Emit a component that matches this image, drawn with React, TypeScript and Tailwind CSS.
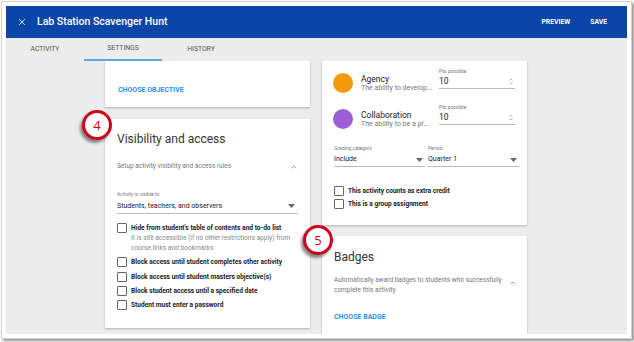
import { X, ChevronUp } from 'lucide-react';

const Caret = () => (
    <svg width="7" height="4" viewBox="0 0 7 4" className="shrink-0">
        <path d="M0 0 L7 0 L3.5 4 Z" fill="#666" />
    </svg>
);

const Spinner = () => (
    <svg width="4" height="7" viewBox="0 0 4 7" className="shrink-0">
        <path d="M0.5 2.5 L2 1 L3.5 2.5 M0.5 4.5 L2 6 L3.5 4.5" stroke="#999" strokeWidth="0.7" fill="none" />
    </svg>
);

const Box = () => <div className="w-[10px] h-[10px] shrink-0 border border-[#666] rounded-[1px] bg-white" />;

const Check = ({ label }: { label: string }) => (
    <div className="flex items-start gap-[4px]">
        <Box />
        <span className="text-[6.6px] leading-[10px] font-bold text-[#222]">{label}</span>
    </div>
);

const Marker = ({ n, className }: { n: number; className: string }) => (
    <div
        className={`absolute w-[30px] h-[30px] rounded-full bg-white border-[3px] border-[#d0021b] shadow-[-2px_3px_3px_rgba(0,0,0,0.45)] flex items-center justify-center text-[13px] leading-none text-[#d0021b] font-['Open_Sans',sans-serif] z-10 ${className}`}
    >
        {n}
    </div>
);

const Objective = ({ color, name, desc }: { color: string; name: string; desc: string }) => (
    <div className="flex items-start h-[36px]">
        <div className={`mt-[8px] w-[20px] h-[20px] rounded-full shrink-0 ${color}`} />
        <div className="ml-[8px] w-[72px] mt-[9px]">
            <div className="text-[8.5px] leading-[10px] text-[#222]">{name}</div>
            <div className="text-[7px] leading-[9px] text-[#777] whitespace-nowrap">{desc}</div>
        </div>
        <div className="ml-[6px] w-[76px] mt-[3px]">
            <div className="text-[5px] leading-[6px] text-[#777]">Pts possible</div>
            <div className="mt-[2px] h-[13px] border-b border-[#bbb] flex items-start justify-between pr-[2px]">
                <div className="text-[8.5px] leading-[10px] text-[#222]">10</div>
                <div className="mt-[2px]"><Spinner /></div>
            </div>
        </div>
    </div>
);

const Select = ({ label, value, w }: { label: string; value: string; w: string }) => (
    <div className={w}>
        <div className="text-[5px] leading-[6px] text-[#777]">{label}</div>
        <div className="mt-[4px] h-[12px] border-b border-[#bbb] flex items-start justify-between pr-[2px]">
            <div className="text-[7px] leading-[9px] text-[#222]">{value}</div>
            <div className="mt-[3px]"><Caret /></div>
        </div>
    </div>
);

export default function App() {
    return (
        <div className="w-[634px] h-[342px] bg-white font-['Roboto',sans-serif] relative">
            <div className="ml-px mt-px w-[631px] h-[338px] border border-[#d2d2d2] bg-white p-[4px] shadow-[2px_2px_3px_rgba(0,0,0,0.45)]">
                <div className="w-[621px] h-[328px] flex flex-col overflow-hidden relative">
                    {/* header */}
                    <div className="h-[32px] shrink-0 bg-[#0a45a7] flex items-center text-white">
                        <X size={10} strokeWidth={2} className="ml-[11px]" />
                        <span className="ml-[10px] text-[10.5px] font-medium">Lab Station Scavenger Hunt</span>
                        <span className="ml-auto text-[6.8px] font-bold">PREVIEW</span>
                        <span className="ml-[20px] mr-[20px] text-[6.8px] font-bold">SAVE</span>
                    </div>

                    {/* tabs */}
                    <div className="h-[23px] shrink-0 bg-[#ececec] flex text-[6.8px] text-[#555] shadow-[0_1px_1px_rgba(0,0,0,0.06)]">
                        <div className="w-[78px] flex items-center justify-center">ACTIVITY</div>
                        <div className="w-[78px] flex items-center justify-center border-b-2 border-[#5ea3e3]">SETTINGS</div>
                        <div className="w-[78px] flex items-center justify-center">HISTORY</div>
                    </div>

                    {/* content */}
                    <div className="flex-1 bg-[#ececec] flex gap-[12px] pl-[99px] overflow-hidden">
                        <div className="w-[205px] flex flex-col gap-[12px]">
                            <div className="h-[46px] shrink-0 bg-white shadow-[0_1px_2px_rgba(0,0,0,0.25)] px-[13px] pt-[25px]">
                                <div className="text-[7px] leading-[9px] font-bold text-[#2196f3]">CHOOSE OBJECTIVE</div>
                            </div>
                            <div className="h-[209px] shrink-0 bg-white shadow-[0_1px_2px_rgba(0,0,0,0.25)] pl-[12px] pr-[12px] pt-[12px]">
                                <div className="text-[12px] leading-[16px] text-[#333]">Visibility and access</div>
                                <div className="mt-[15px] h-[10px] flex items-center justify-between">
                                    <span className="text-[6.5px] text-[#777]">Setup activity visibility and access rules</span>
                                    <ChevronUp size={8} strokeWidth={2} className="text-[#777]" />
                                </div>
                                <div className="mt-[19px] text-[5px] leading-[6px] text-[#777]">Activity is visible to</div>
                                <div className="mt-[3px] h-[14px] border-b border-[#bbb] flex items-center justify-between pr-[3px] pb-[1px]">
                                    <span className="text-[7px] text-[#222]">Students, teachers, and observers</span>
                                    <Caret />
                                </div>
                                <div className="mt-[9px] flex flex-col gap-[4.3px]">
                                    <div className="flex items-start gap-[4px]">
                                        <Box />
                                        <div className="text-[6.6px] leading-[10px]">
                                            <div className="font-bold text-[#222]">Hide from student's table of contents and to-do list</div>
                                            <div className="text-[#888]">It is still accessible (if no other restrictions apply) from course links and bookmarks</div>
                                        </div>
                                    </div>
                                    <Check label="Block access until student completes other activity" />
                                    <Check label="Block access until student masters objective(s)" />
                                    <Check label="Block student access until a specified date" />
                                    <Check label="Student must enter a password" />
                                </div>
                            </div>
                        </div>

                        <div className="w-[205px] flex flex-col gap-[11px]">
                            <div className="h-[164px] shrink-0 bg-white shadow-[0_1px_2px_rgba(0,0,0,0.25)] pl-[11px] pr-[8px] pt-[4px]">
                                <Objective color="bg-[#f39a0b]" name="Agency" desc="The ability to develop..." />
                                <Objective color="bg-[#9c5fd7]" name="Collaboration" desc="The ability to be a pr..." />
                                <div className="mt-[8px] flex gap-[3px] pl-[1px]">
                                    <Select label="Grading category" value="Include" w="w-[91px]" />
                                    <Select label="Period" value="Quarter 1" w="w-[91px]" />
                                </div>
                                <div className="mt-[19px] pl-[1px] flex flex-col gap-[3px]">
                                    <Check label="This activity counts as extra credit" />
                                    <Check label="This is a group assignment" />
                                </div>
                            </div>
                            <div className="h-[120px] shrink-0 bg-white shadow-[0_1px_2px_rgba(0,0,0,0.25)] pl-[12px] pr-[10px] pt-[13px]">
                                <div className="text-[12px] leading-[16px] text-[#333]">Badges</div>
                                <div className="mt-[10px] flex items-start">
                                    <span className="w-[176px] text-[6.5px] leading-[10px] text-[#777]">
                                        Automatically award badges to students who successfully complete this activity
                                    </span>
                                    <ChevronUp size={8} strokeWidth={2} className="text-[#777] mt-[4px]" />
                                </div>
                                <div className="mt-[17px] text-[7px] leading-[10px] font-bold text-[#2196f3]">CHOOSE BADGE</div>
                            </div>
                        </div>
                    </div>

                    <Marker n={4} className="left-[76px] top-[104px]" />
                    <Marker n={5} className="left-[297px] top-[219px]" />
                </div>
            </div>
        </div>
    );
}
